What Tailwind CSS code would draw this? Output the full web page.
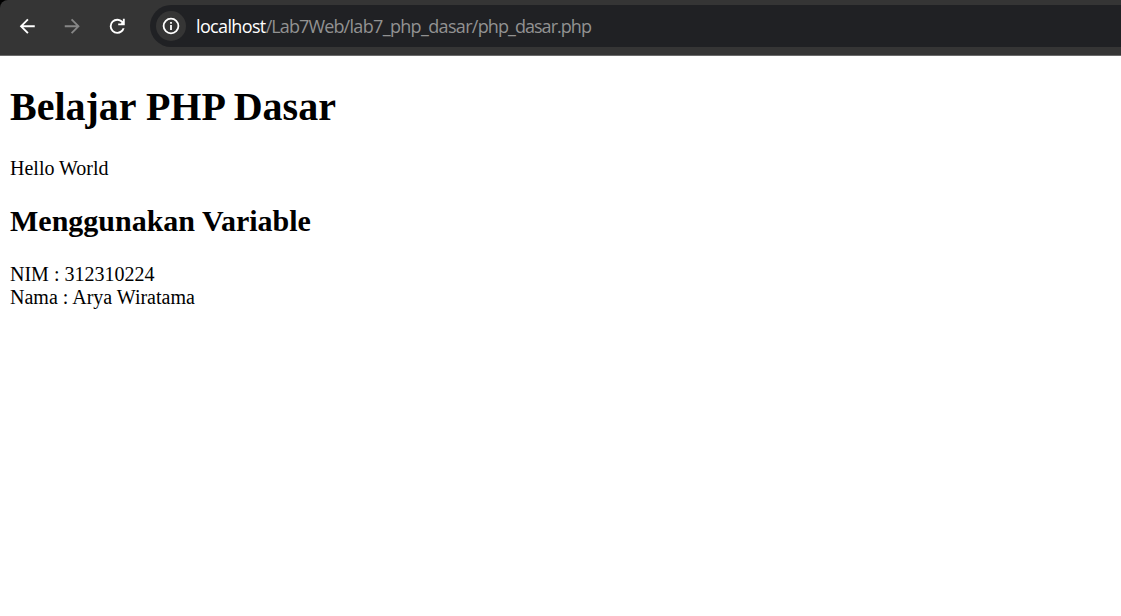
<!DOCTYPE html>
<html lang="id">
<head>
<meta charset="utf-8">
<title>Belajar PHP Dasar</title>
<script src="https://cdn.jsdelivr.net/npm/@tailwindcss/browser@4"></script>
</head>
<body class="h-[616px] overflow-hidden bg-white text-black">
<div class="bg-black">
<header class="flex h-14 items-start rounded-tl-[8px] border-b border-[#6a6a6a] bg-[#353535]">
  <nav class="flex w-[150px] shrink-0 gap-[22.5px] pt-[14.5px] pl-[16.25px] text-white">
    <svg class="size-[22.5px]" viewBox="0 0 24 24" fill="currentColor"><path d="m7.825 13 5.6 5.6L12 20l-8-8 8-8 1.425 1.4-5.600 5.600H20v2z"/></svg>
    <svg class="size-[22.5px] text-[#868686]" viewBox="0 0 24 24" fill="currentColor"><path d="M16.175 13H4v-2h12.175l-5.600-5.600L12 4l8 8-8 8-1.425-1.400z"/></svg>
    <svg class="size-[22.5px]" viewBox="0 0 24 24" fill="currentColor"><path d="M12 20q-3.350 0-5.675-2.325T4 12t2.325-5.675T12 4q1.725 0 3.300.712T18 6.750V4h2v7h-7V9h4.200q-.8-1.400-2.187-2.200T12 6Q9.500 6 7.750 7.750T6 12t1.750 4.250T12 18q1.925 0 3.475-1.100T17.650 14h2.100q-.7 2.650-2.850 4.325T12 20"/><path d="M15 10h4V6z"/></svg>
  </nav>
  <div class="mt-[5px] flex h-[42px] flex-1 items-center rounded-l-full bg-[#202124] pl-[6px]">
    <span class="flex size-[30px] items-center justify-center rounded-full bg-[#353535] text-white"><svg class="size-5" viewBox="0 0 20 20" fill="none" stroke="currentColor" stroke-width="1.800"><circle cx="10" cy="10" r="7.400"/><path d="M10 9v5M10 6v1.800"/></svg></span>
    <p class="ml-[10px] whitespace-nowrap font-['Open_Sans',sans-serif] text-[18px] leading-6 tracking-[-0.66px] text-[#929292]"><span class="tracking-[-0.64px] text-white">localhost</span><span class="tracking-[-0.9px]">/Lab7Web</span>/lab7_php_dasar/<span class="tracking-[-0.96px]">php_dasar.php</span></p>
  </div>
</header>
</div>
<main class="px-[10px] pt-[28px] font-['Liberation_Serif',serif] text-[20px] leading-[23px]">
  <h1 class="text-[40px] leading-[46px] font-bold">Belajar PHP Dasar</h1>
  <p class="mt-[27px]">Hello World</p>
  <h2 class="mt-6 text-[30px] leading-[34px] font-bold">Menggunakan Variable</h2>
  <p class="mt-[25px]">NIM : 312310224<br>Nama : Arya Wiratama</p>
</main>
</body>
</html>
